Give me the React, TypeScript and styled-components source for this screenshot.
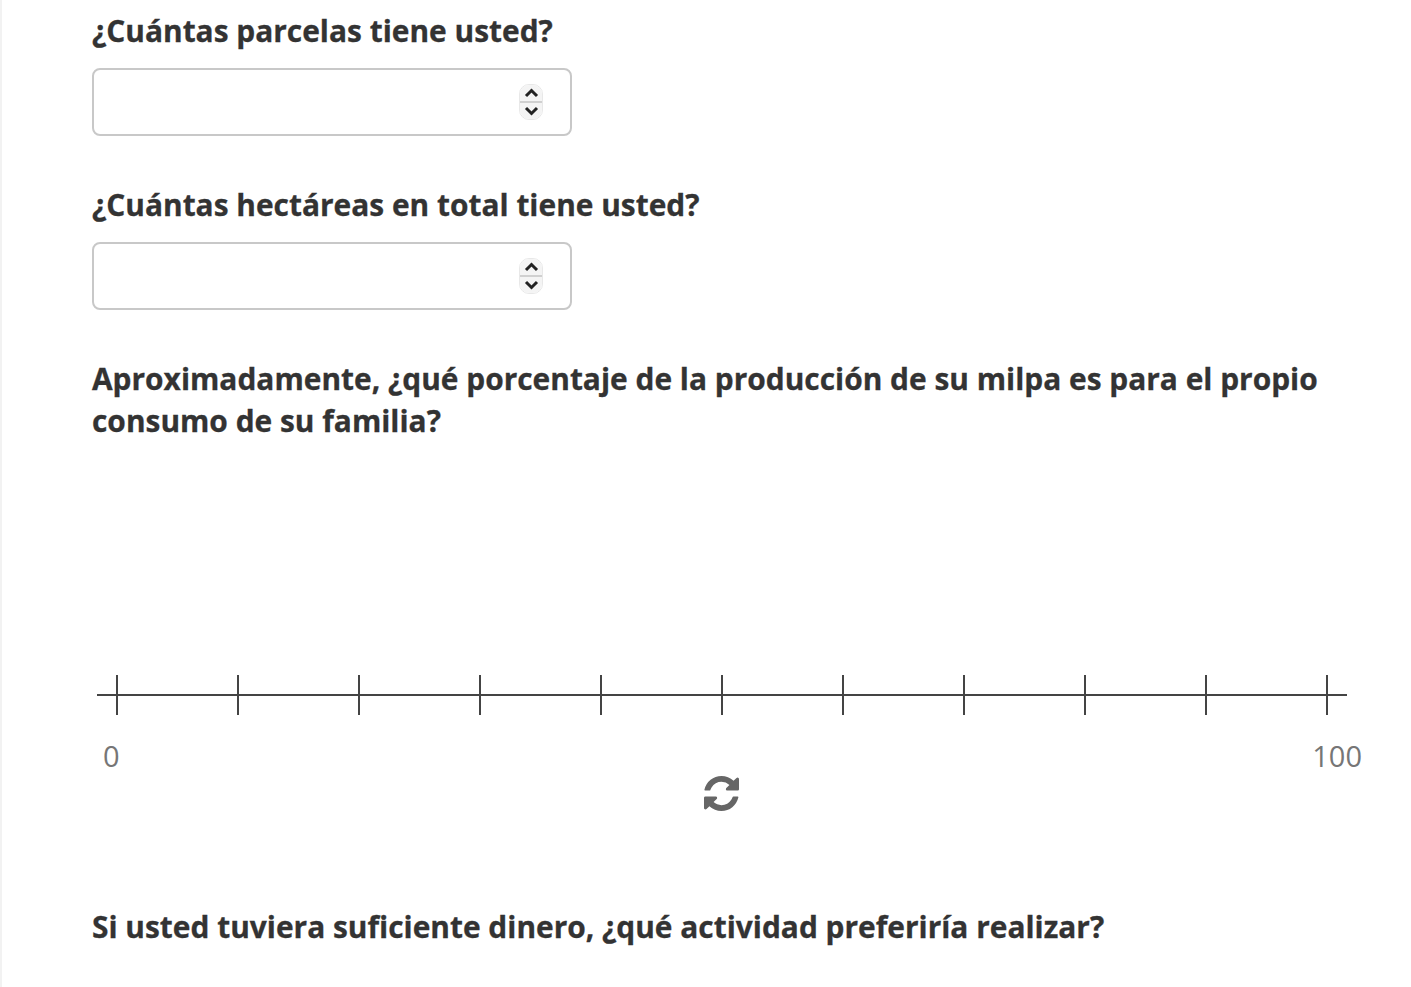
import React from "react";
import styled, { createGlobalStyle } from "styled-components";

const GlobalStyle = createGlobalStyle`
	html, body {
		margin: 0;
		height: 100%;
		overflow: hidden;
		background: #fff;
	}
`;

const Page = styled.main`
	height: 987px;
	box-sizing: border-box;
	border-left: 2px solid #f2f2f2;
	padding: 10px 48px 0 90px;
	font-family: "Open Sans", "Noto Sans", sans-serif;
	color: #333;
`;

const Question = styled.h2`
	margin: 0;
	font-size: 29.9px;
	font-weight: 700;
	line-height: 42px;
	color: #333;
	-webkit-text-stroke: 0.3px #333;
`;

const NumberBox = styled.div`
	width: 480px;
	height: 68px;
	box-sizing: border-box;
	margin: 16px 0 48px;
	padding-right: 27px;
	display: flex;
	align-items: center;
	justify-content: flex-end;
	border: 2px solid #c8c8c8;
	border-radius: 8px;
	background: #fff;
`;

const NumberField = styled.input`
	flex: 1;
	min-width: 0;
	height: 100%;
	border: none;
	outline: none;
	background: transparent;
	font: inherit;
`;

const Spinner = styled.div`
	width: 24px;
	height: 36px;
	box-sizing: border-box;
	display: flex;
	flex-direction: column;
	border: 1px solid #e8e8e8;
	border-radius: 10px;
	overflow: hidden;
`;

const SpinHalf = styled.div`
	flex: 1;
	display: flex;
	align-items: center;
	justify-content: center;
	background: #f4f4f4;

	& + & {
		border-top: 2px solid #d0d0d0;
	}
`;

const Slider = styled.section`
	margin-top: 233px;
	margin-right: 1px;
`;

const Axis = styled.svg`
	display: block;
	margin-left: 5px;
`;

const Scale = styled.div`
	display: flex;
	justify-content: space-between;
	margin: 21px 0 0 11px;
	font-size: 29px;
	line-height: 40px;
	color: #767676;
`;

const ResetRow = styled.div`
	display: flex;
	justify-content: center;
	width: 1258px;
	line-height: 0;
	color: #666;
`;

const LastQuestion = styled(Question)`
	margin-top: 95px;
`;

const Chevron = ({ up }: { up?: boolean }) => (
	<svg width="15" height="10" viewBox="0 0 15 10">
		<path
			d={up ? "M2 8L7.500 2.500 13 8" : "M2 2l5.500 5.500L13 2"}
			fill="none"
			stroke="#222"
			strokeWidth="3"
		/>
	</svg>
);

const RefreshIcon = () => (
	<svg width="35" height="35" viewBox="128 128 1536 1536" fill="currentColor">
		<path d="M1639 1056q0 5-1 7-64 268-268 434.500t-478 166.500q-146 0-282.500-55t-243.500-157l-129 129q-19 19-45 19t-45-19-19-45v-448q0-26 19-45t45-19h448q26 0 45 19t19 45-19 45l-137 137q71 66 161 102t187 36q134 0 250-65t186-179q11-17 53-117 8-23 30-23h192q13 0 22.500 9.500t9.500 22.500zm25-800v448q0 26-19 45t-45 19h-448q-26 0-45-19t-19-45 19-45l138-138q-148-137-349-137-134 0-250 65t-186 179q-11 17-53 117-8 23-30 23h-199q-13 0-22.500-9.500t-9.500-22.500v-7q65-268 270-434.500t480-166.500q146 0 284 55.500t245 156.500l130-129q19-19 45-19t45 19 19 45z" />
	</svg>
);

const NumberInput = () => (
	<NumberBox>
		<NumberField type="text" />
		<Spinner>
			<SpinHalf>
				<Chevron up />
			</SpinHalf>
			<SpinHalf>
				<Chevron />
			</SpinHalf>
		</Spinner>
	</NumberBox>
);

const ticks = Array.from({ length: 11 }, (_, i) => 20 + i * 121);

const App = () => (
	<Page>
		<GlobalStyle />
		<Question>¿Cuántas parcelas tiene usted?</Question>
		<NumberInput />
		<Question>¿Cuántas hectáreas en total tiene usted?</Question>
		<NumberInput />
		<Question>
			Aproximadamente, ¿qué porcentaje de la producción de su milpa es para el
			propio consumo de su familia?
		</Question>
		<Slider>
			<Axis width="1250" height="40" viewBox="0 0 1250 40">
				<path d="M0 20H1250" stroke="#444" strokeWidth="2" />
				{ticks.map((x) => (
					<path key={x} d={`M${x} 0V40`} stroke="#444" strokeWidth="2" />
				))}
			</Axis>
			<Scale>
				<span>0</span>
				<span>100</span>
			</Scale>
			<ResetRow>
				<RefreshIcon />
			</ResetRow>
		</Slider>
		<LastQuestion>
			Si usted tuviera suficiente dinero, ¿qué actividad preferiría realizar?
		</LastQuestion>
	</Page>
);

export default App;
